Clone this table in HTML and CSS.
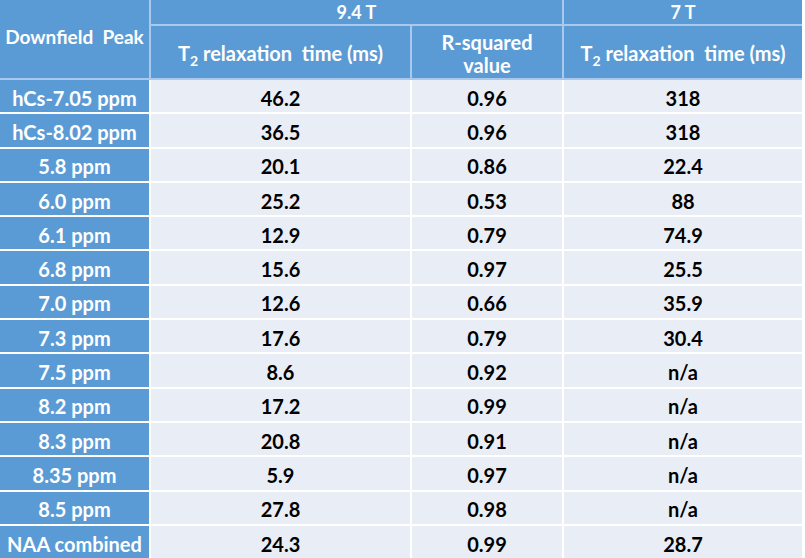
FILE: index.html
```html
<!DOCTYPE html>
<html>
<head>
<meta charset="utf-8">
<link rel="stylesheet" href="styles.css">
</head>
<body>
<table class="t2">
  <colgroup>
    <col class="c1"><col class="c2"><col class="c3"><col class="c4">
  </colgroup>
  <thead>
    <tr class="h1">
      <th rowspan="2" class="peak-head">Downfield&nbsp; Peak</th>
      <th colspan="2">9.4 T</th>
      <th>7 T</th>
    </tr>
    <tr class="h2">
      <th>T<sub>2</sub> relaxation&nbsp; time (ms)</th>
      <th>R-squared<br>value</th>
      <th>T<sub>2</sub> relaxation&nbsp; time (ms)</th>
    </tr>
  </thead>
  <tbody>
    <tr><th>hCs-7.05 ppm</th><td>46.2</td><td>0.96</td><td>318</td></tr>
    <tr><th>hCs-8.02 ppm</th><td>36.5</td><td>0.96</td><td>318</td></tr>
    <tr><th>5.8 ppm</th><td>20.1</td><td>0.86</td><td>22.4</td></tr>
    <tr><th>6.0 ppm</th><td>25.2</td><td>0.53</td><td>88</td></tr>
    <tr><th>6.1 ppm</th><td>12.9</td><td>0.79</td><td>74.9</td></tr>
    <tr><th>6.8 ppm</th><td>15.6</td><td>0.97</td><td>25.5</td></tr>
    <tr><th>7.0 ppm</th><td>12.6</td><td>0.66</td><td>35.9</td></tr>
    <tr><th>7.3 ppm</th><td>17.6</td><td>0.79</td><td>30.4</td></tr>
    <tr><th>7.5 ppm</th><td>8.6</td><td>0.92</td><td>n/a</td></tr>
    <tr><th>8.2 ppm</th><td>17.2</td><td>0.99</td><td>n/a</td></tr>
    <tr><th>8.3 ppm</th><td>20.8</td><td>0.91</td><td>n/a</td></tr>
    <tr><th>8.35 ppm</th><td>5.9</td><td>0.97</td><td>n/a</td></tr>
    <tr><th>8.5 ppm</th><td>27.8</td><td>0.98</td><td>n/a</td></tr>
    <tr><th>NAA combined</th><td>24.3</td><td>0.99</td><td>28.7</td></tr>
  </tbody>
</table>
</body>
</html>
```

FILE: styles.css
```css
html, body {
  margin: 0;
  padding: 0;
  background: #ffffff;
  overflow: hidden;
}

.t2 {
  border-collapse: separate;
  border-spacing: 0;
  table-layout: fixed;
  width: 802px;
  font-family: Lato, "Open Sans", sans-serif;
  font-weight: bold;
  font-size: 20px;
}

.c1 { width: 151px; }
.c2 { width: 261px; }
.c3 { width: 152px; }
.c4 { width: 238px; }

.t2 th,
.t2 td {
  padding: 0;
  text-align: center;
  vertical-align: middle;
  border-right: 2px solid #ffffff;
  border-bottom: 2px solid #ffffff;
  box-sizing: border-box;
  white-space: nowrap;
}

.t2 th {
  background: #5b9bd5;
  color: #ffffff;
  font-weight: bold;
}

.t2 thead th {
  border-color: #a9c9ec;
}

.t2 tr > :last-child {
  border-right: none;
}

.t2 td {
  background: #e9eef6;
  color: #000000;
}

.t2 tbody th,
.t2 tbody td {
  line-height: 22px;
  padding-top: 3px;
}

.h1 { height: 26px; }
.h1 th { line-height: 20px; padding-bottom: 1px; font-size: 18px; }
.h2 { height: 54px; }
.h2 th { line-height: 23px; padding-top: 3px; }
.peak-head { padding-bottom: 4px !important; font-size: 19px !important; }

.t2 tbody tr { height: 34.3px; }

sub {
  font-size: 14px;
  vertical-align: -5px;
  line-height: 0;
}
```
